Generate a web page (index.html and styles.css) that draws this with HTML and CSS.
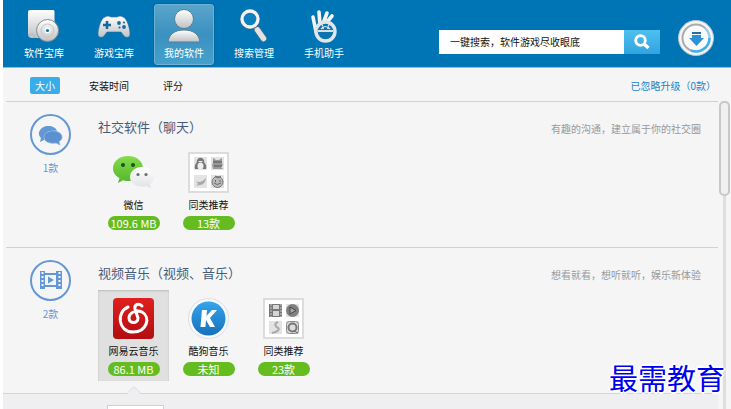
FILE: index.html
```html
<!DOCTYPE html>
<html lang="zh-CN">
<head>
    <meta charset="UTF-8">
    <meta name="viewport" content="width=device-width, initial-scale=1.0">
    <title>我的软件</title>
    <link rel="stylesheet" href="styles.css">
</head>
<body>
    <svg width="0" height="0" class="defs" aria-hidden="true">
        <defs>
            <linearGradient id="silver" x1="0" y1="0" x2="0" y2="1">
                <stop offset="0" stop-color="#ffffff"/>
                <stop offset="1" stop-color="#bfc1c4"/>
            </linearGradient>
            <linearGradient id="green" x1="0" y1="0" x2="0" y2="1">
                <stop offset="0" stop-color="#86dc4c"/>
                <stop offset="1" stop-color="#52b52b"/>
            </linearGradient>
            <linearGradient id="pearl" x1="0" y1="0" x2="0" y2="1">
                <stop offset="0" stop-color="#ffffff"/>
                <stop offset="1" stop-color="#dfe1e4"/>
            </linearGradient>
            <linearGradient id="red" x1="0" y1="0" x2="0" y2="1">
                <stop offset="0" stop-color="#e0201f"/>
                <stop offset="1" stop-color="#b30d10"/>
            </linearGradient>
            <linearGradient id="blue" x1="0" y1="0" x2="0" y2="1">
                <stop offset="0" stop-color="#35a5ea"/>
                <stop offset="1" stop-color="#1670bd"/>
            </linearGradient>
        </defs>
    </svg>

    <div class="app">
        <header class="header">
            <nav class="nav">
                <a href="#" class="nav-item">
                    <svg width="32" height="34" viewBox="0 0 32 34">
                        <path d="M2 1h23a1.500 1.500 0 0 1 1.500 1.500V29H4a4 4 0 0 1-4-4V3a2 2 0 0 1 2-2z" fill="url(#silver)"/>
                        <path d="M1 26q5-3 6 3" fill="none" stroke="#b4b7ba"/>
                        <circle cx="19.500" cy="21.500" r="11" fill="url(#silver)" stroke="#7f8b93"/>
                        <circle cx="19.500" cy="21.500" r="6.500" fill="none" stroke="#c4c6c8"/>
                        <circle cx="19.500" cy="21.500" r="3" fill="#fff"/>
                        <circle cx="19.500" cy="21.500" r="1.600" fill="#1671ad"/>
                    </svg>
                    <span>软件宝库</span>
                </a>
                <a href="#" class="nav-item">
                    <svg width="34" height="34" viewBox="0 0 34 34">
                        <path d="M8 8q3-2 6 0h6q3-2 6 0c4 1 7 12 7 17 0 4-4 4-6 2l-3-4H10l-3 4c-2 2-6 2-6-2 0-5 3-16 7-17z" fill="url(#silver)" stroke="#2f6f9a" stroke-width=".6"/>
                        <path d="M6 16h8M10 12v8" stroke="#16699f" stroke-width="2.500"/>
                        <g fill="#16699f"><circle cx="22" cy="14" r="1.900"/><circle cx="27" cy="18" r="1.900"/><circle cx="22.500" cy="18.500" r="1.100"/><circle cx="27" cy="13.500" r="1.100"/></g>
                    </svg>
                    <span>游戏宝库</span>
                </a>
                <a href="#" class="nav-item active" aria-current="page">
                    <svg width="34" height="34" viewBox="0 0 34 34">
                        <circle cx="17" cy="10" r="9.500" fill="url(#silver)" stroke="#527f98"/>
                        <path d="M1 33c1-8 7-12 16-12s15 4 16 12z" fill="url(#silver)" stroke="#527f98"/>
                    </svg>
                    <span>我的软件</span>
                </a>
                <a href="#" class="nav-item">
                    <svg width="30" height="34" viewBox="0 0 30 34">
                        <path d="M14 16l4 5" stroke="#d9dbdd" stroke-width="3"/>
                        <path d="M18.500 21l6 8.500" stroke="#476f89" stroke-width="7" stroke-linecap="round"/>
                        <path d="M18.500 21l6 8.500" stroke="#e2e2e3" stroke-width="5.500" stroke-linecap="round"/>
                        <circle cx="11" cy="10" r="8" fill="none" stroke="#476f89" stroke-width="4.500"/>
                        <circle cx="11" cy="10" r="8" fill="#0d7fbe" stroke="#f4f4f4" stroke-width="3.300"/>
                    </svg>
                    <span>搜索管理</span>
                </a>
                <a href="#" class="nav-item">
                    <svg width="30" height="34" viewBox="0 0 30 34">
                        <path d="M7 23L4 8M11 16L10 3M15 12l3-8M18 13l5-6" fill="none" stroke="#f5f5f5" stroke-width="3.600" stroke-linecap="round"/>
                        <circle cx="16.500" cy="22.500" r="9.500" fill="#0d74b0" stroke="#e3e4e5" stroke-width="3.400"/>
                        <path d="M9 22h15" stroke="#eee" stroke-width="1.800"/>
                        <path d="M12 14l2 3.500M21 14l-2 3.500" stroke="#eee" stroke-width="1.200"/>
                        <path d="M12 20q4.500-5 9 0" fill="none" stroke="#dfe3e6" stroke-width="1.200"/>
                        <circle cx="14" cy="19" r="1" fill="#eee"/><circle cx="19" cy="19" r="1" fill="#eee"/>
                    </svg>
                    <span>手机助手</span>
                </a>
            </nav>
            <form class="search">
                <input type="search" class="search-input" aria-label="搜索" placeholder="一键搜索，软件游戏尽收眼底">
                <button type="button" class="search-btn" aria-label="搜索">
                    <svg width="18" height="18" viewBox="0 0 18 18" fill="none" stroke="#fff">
                        <circle cx="7.500" cy="7.500" r="4.800" stroke-width="2.800"/>
                        <path d="M11 11l4.500 4" stroke-width="3.400"/>
                    </svg>
                </button>
            </form>
            <button type="button" class="download" aria-label="下载管理">
                <svg width="36" height="36" viewBox="0 0 36 36">
                    <circle cx="18" cy="18" r="17.500" fill="#f4f4f5" stroke="#b9c6ce"/>
                    <circle cx="18" cy="18" r="13.500" fill="#fafafa" stroke="#a9acaf" stroke-width="2"/>
                    <path d="M31.500 18A13.500 13.500 0 0 1 13 30.500" fill="none" stroke="#3fb2ee" stroke-width="2.500"/>
                    <path d="M27 8a13.500 13.500 0 0 1 4.500 10" fill="none" stroke="#93d3f3" stroke-width="2"/>
                    <path d="M14 12h9v2h-9z" fill="#236f9d"/>
                    <path d="M14 15h9v3h3l-7.500 8L11 18h3z" fill="#2b92d6"/>
                </svg>
            </button>
        </header>

        <div class="toolbar">
            <button type="button" class="tab selected">大小</button>
            <button type="button" class="tab">安装时间</button>
            <button type="button" class="tab">评分</button>
            <a href="#" class="ignored">已忽略升级（0款）</a>
        </div>

        <div class="content">
            <main class="list">
                <section class="group">
                    <div class="category">
                        <svg width="41" height="41" viewBox="0 0 41 41">
                            <circle cx="20.500" cy="20.500" r="19.500" fill="none" stroke="#6497d5" stroke-width="2"/>
                            <path d="M18 12c5 0 8 2 9 5-8-1-14 2-13 9l-4 2 1-4c-5-5 0-12 7-12z" fill="#6497d5"/>
                            <path d="M23 17c5 0 9 2.500 9 6 0 2-1 3.500-3 4.500l1 3.500-4-2c-6 1-12-1-12-6 0-3.500 4-6 9-6z" fill="#5b90d1" stroke="#8eb3e0" stroke-width=".7"/>
                        </svg>
                        <span>1款</span>
                    </div>
                    <div class="group-body">
                        <div class="group-head">
                            <h2>社交软件（聊天）</h2>
                            <p>有趣的沟通，建立属于你的社交圈</p>
                        </div>
                        <div class="apps">
                            <button type="button" class="app-item">
                                <svg width="41" height="41" viewBox="0 0 41 41">
                                    <path d="M15 4c9 0 15 5.500 15 12.500S24 29 15 29c-2 0-4-.3-5-.8L5 31l1.500-5C2.500 24 0 20.500 0 16.500 0 9.500 6 4 15 4z" fill="url(#green)"/>
                                    <circle cx="10" cy="13" r="2" fill="#20501c"/><circle cx="20" cy="13" r="2" fill="#20501c"/>
                                    <path d="M29 15c7 0 12 4.500 12 10 0 3-2 6-4 7.500l1 4-5-2.500c-1 .4-2 .5-4 .5-7 0-12-4-12-9.500S22 15 29 15z" fill="url(#pearl)"/>
                                    <circle cx="25" cy="22.500" r="1.600" fill="#66707a"/><circle cx="33" cy="22.500" r="1.600" fill="#66707a"/>
                                </svg>
                                <span class="name">微信</span>
                                <span class="badge">109.6 MB</span>
                            </button>
                            <button type="button" class="app-item">
                                <svg width="41" height="41" viewBox="0 0 41 41">
                                    <path d="M1 1h39v39H1z" fill="#fff" stroke="#dcdcdc" stroke-width="2"/>
                                    <path d="M6 5h13v13H6zM23 5h13v13H23zM6 23h13v13H6zM23 23h13v13H23z" fill="#e3e3e3"/>
                                    <path d="M7 17q-1-4 1.500-6c0-7 8-7 8 0q2.500 2 1.500 6z" fill="#777"/><ellipse cx="12.500" cy="14" rx="3" ry="3.500" fill="#eee"/><path d="M10.500 9.500h4" stroke="#eee"/>
                                    <path d="M25 6l3 2h3l3-2v5l1 2-2 2 2 2H25l-1-4 1-2z" fill="#999"/><path d="M25 10h9M26 14h8" stroke="#555"/>
                                    <path d="M8 29q4 3 10-3-1 7-6 7l-4 1 2-2z" fill="#aaa"/>
                                    <circle cx="29.500" cy="30" r="5.500" fill="#bbb" stroke="#777"/><path d="M27 24l3 2 3-2M26 31q3 3 7 0M27.500 28v2M32 28v2" stroke="#666" fill="none"/>
                                </svg>
                                <span class="name">同类推荐</span>
                                <span class="badge">13款</span>
                            </button>
                        </div>
                    </div>
                </section>

                <section class="group">
                    <div class="category">
                        <svg width="41" height="41" viewBox="0 0 41 41">
                            <circle cx="20.500" cy="20.500" r="19.500" fill="none" stroke="#6497d5" stroke-width="2"/>
                            <path d="M10 11h5v2h11v-2h6v18h-6v-2H15v2h-5zM15 15v10h11V15z" fill="#6497d5" fill-rule="evenodd"/>
                            <path d="M12.500 12v16M29.500 12v16" stroke="#f5f5f5" stroke-width="2" stroke-dasharray="2"/>
                            <path d="M18 16.500l6 3.500-6 3.500z" fill="#6497d5"/>
                        </svg>
                        <span>2款</span>
                    </div>
                    <div class="group-body">
                        <div class="group-head">
                            <h2>视频音乐（视频、音乐）</h2>
                            <p>想看就看，想听就听，娱乐新体验</p>
                        </div>
                        <div class="apps">
                            <button type="button" class="app-item current">
                                <svg width="41" height="41" viewBox="0 0 41 41">
                                    <rect width="41" height="41" rx="4" fill="url(#red)"/>
                                    <path d="M15 9C3 14 5 34 20 34c14 0 18-15 9-20-6-3-13 1-13 6 0 6 9 6 9 0l-3-9c-1-5 4-6 7-3" fill="none" stroke="#fff" stroke-width="3" stroke-linecap="round"/>
                                </svg>
                                <span class="name">网易云音乐</span>
                                <span class="badge">86.1 MB</span>
                            </button>
                            <button type="button" class="app-item">
                                <svg width="41" height="41" viewBox="0 0 41 41">
                                    <circle cx="20.500" cy="20.500" r="20" fill="#f6fafd" stroke="#d9dfe4"/>
                                    <circle cx="20.500" cy="20.500" r="17" fill="url(#blue)"/>
                                    <path d="M14 12h5l-.5 6 5.500-6h5l-7 8 5 9h-5l-4-7-.6 7H12.500z" fill="#fff"/>
                                </svg>
                                <span class="name">酷狗音乐</span>
                                <span class="badge">未知</span>
                            </button>
                            <button type="button" class="app-item">
                                <svg width="41" height="41" viewBox="0 0 41 41">
                                    <path d="M1 1h39v39H1z" fill="#fff" stroke="#dcdcdc" stroke-width="2"/>
                                    <path d="M6 6h13v13H6zM6 23h13v13H6zM23 23h13v13H23zM23 6h13v13H23z" fill="#e3e3e3"/>
                                    <path d="M6 6h13v13H6z" fill="#777"/><path d="M10 7h6v4h-6zM10 13h6v5h-6z" fill="#d5d5d5"/><path d="M8 6v13M18 6v13" stroke="#ccc" stroke-dasharray="2 1"/>
                                    <circle cx="29.500" cy="12.500" r="6.500" fill="#808080"/><path d="M27 9l6 3.500-6 3.500z" fill="#aaa" stroke="#444"/>
                                    <path d="M15 24c-5 2-2 5 0 6s0 4-6 5" fill="none" stroke="#aaa" stroke-width="2"/>
                                    <rect x="23.500" y="23.500" width="12" height="12" rx="3" fill="#ddd" stroke="#888"/><circle cx="29.500" cy="29.500" r="4" fill="none" stroke="#777" stroke-width="2"/><path d="M31 33l4 2" stroke="#666"/>
                                </svg>
                                <span class="name">同类推荐</span>
                                <span class="badge">23款</span>
                            </button>
                        </div>
                    </div>
                </section>

                <div class="detail">
                    <svg class="notch" width="14" height="8" viewBox="0 0 14 8">
                        <path d="M0 8l7-7 7 7z" fill="#efeff2"/>
                        <path d="M0 7.500l7-7 7 7" fill="none" stroke="#d9d9de"/>
                    </svg>
                    <div class="detail-card"></div>
                </div>
            </main>
            <div class="scrollbar"><div class="thumb"></div></div>
        </div>

        <div class="watermark">最需教育</div>
    </div>
</body>
</html>
```
FILE: styles.css
```css
* {
    box-sizing: border-box;
}
body {
    margin: 0;
    padding-left: 3px;
    background: #fff;
    font-family: "Noto Sans CJK SC", "Noto Sans", sans-serif;
    font-size: 10px;
    color: #111;
}
button,
input {
    font: inherit;
    color: inherit;
    border: none;
    background: none;
    padding: 0;
}
button {
    cursor: pointer;
}
a {
    text-decoration: none;
}
h2,
p {
    margin: 0;
    font-weight: normal;
}
svg {
    display: block;
    flex: none;
}
.defs {
    position: absolute;
}
.app {
    position: relative;
    display: flex;
    flex-direction: column;
    height: 100vh;
    overflow: hidden;
    background: #f5f5f5;
}

/* header */
.header {
    display: flex;
    align-items: center;
    flex: none;
    padding: 4px 17px 2px 11px;
    background: #0075b5;
    border-bottom: 1px solid #8fbfdc;
}
.nav {
    display: flex;
    gap: 10px;
}
.nav-item {
    display: flex;
    flex-direction: column;
    align-items: center;
    width: 60px;
    padding: 4px 0 3px;
    border: 1px solid transparent;
    border-radius: 3px;
    color: #fff;
    line-height: 16px;
}
.nav-item span {
    margin-top: 2px;
}
.nav-item.active {
    border-color: #6db2d4;
    background: linear-gradient(#5aa5cb, #3b91c0 50%, #47a0cc);
    box-shadow: 0 0 2px #024f7c;
}
.search {
    display: flex;
    margin-left: auto;
    margin-top: 14px;
}
.search-input {
    width: 185px;
    height: 24px;
    padding: 0 11px;
    background: #fff;
    border-radius: 0;
    outline: none;
}
.search-input::placeholder {
    color: #111;
    opacity: 1;
}
.search-btn {
    display: flex;
    align-items: center;
    justify-content: center;
    width: 36px;
    height: 24px;
    background: linear-gradient(#4fc0ee, #2fa4e0);
}
.download {
    margin: 6px 0 0 18px;
}

/* sort toolbar */
.toolbar {
    display: flex;
    align-items: center;
    flex: none;
    gap: 24px;
    height: 33px;
    margin-right: 15px;
    margin-left: 3px;
    padding: 2px 0 0 24px;
}
.tab {
    padding: 0 5px;
    line-height: 17px;
    border-radius: 2px;
}
.tab.selected {
    background: #37aeea;
    color: #fff;
}
.ignored {
    margin-left: auto;
    color: #2284c8;
}

/* software list */
.content {
    display: flex;
    flex: 1;
    min-height: 0;
}
.list {
    display: flex;
    flex-direction: column;
    flex: 1;
}
.group {
    display: flex;
    flex: none;
    margin-left: 3px;
    padding: 12px 17px 12px 24px;
    border-top: 1px solid #d2d2d4;
}
.category {
    display: flex;
    flex-direction: column;
    align-items: center;
    width: 41px;
    color: #6497d5;
    line-height: 26px;
}
.group-body {
    flex: 1;
    margin-left: 27px;
}
.group-head {
    display: flex;
    justify-content: space-between;
    margin: 3px 0 7px;
    line-height: 20px;
}
.group-head h2 {
    font-size: 13px;
    color: #465b7c;
}
.group-head p {
    padding-top: 4px;
    line-height: 16px;
    color: #999;
}
.apps {
    display: flex;
    gap: 4px;
}
.app-item {
    display: flex;
    flex-direction: column;
    align-items: center;
    width: 71px;
    padding: 8px 0 5px;
}
.app-item.current {
    background: #e0e0e0;
    box-shadow: inset 0 1px 2px #bbb;
}
.name {
    line-height: 23px;
}
.badge {
    width: 52px;
    height: 14px;
    border-radius: 7px;
    background: #65bc20;
    color: #fff;
    font-size: 11px;
    line-height: 14px;
}
.detail {
    position: relative;
    flex: 1;
    padding: 11px 104px;
    background: #efeff2;
    border-top: 1px solid #d4d4da;
}
.notch {
    position: absolute;
    top: -8px;
    left: 124px;
}
.detail-card {
    width: 57px;
    height: 60px;
    border: 1px solid #cfd0da;
    background: #fff;
}
.scrollbar {
    display: flex;
    flex-direction: column;
    align-items: center;
    width: 13px;
}
.scrollbar::after {
    content: "";
    flex: 1;
    width: 3px;
    background: #dedede;
}
.thumb {
    width: 11px;
    height: 95px;
    border: 2px solid #c8c8c8;
    border-radius: 5px;
    background: #f0f0f0;
}
.watermark {
    position: absolute;
    right: 6px;
    bottom: 10px;
    font-size: 29px;
    line-height: 44px;
    color: #0000f0;
    text-shadow: 2px 0 #fff, -2px 0 #fff, 0 2px #fff, 0 -2px #fff, 1px 1px #fff, -1px -1px #fff;
}
```
